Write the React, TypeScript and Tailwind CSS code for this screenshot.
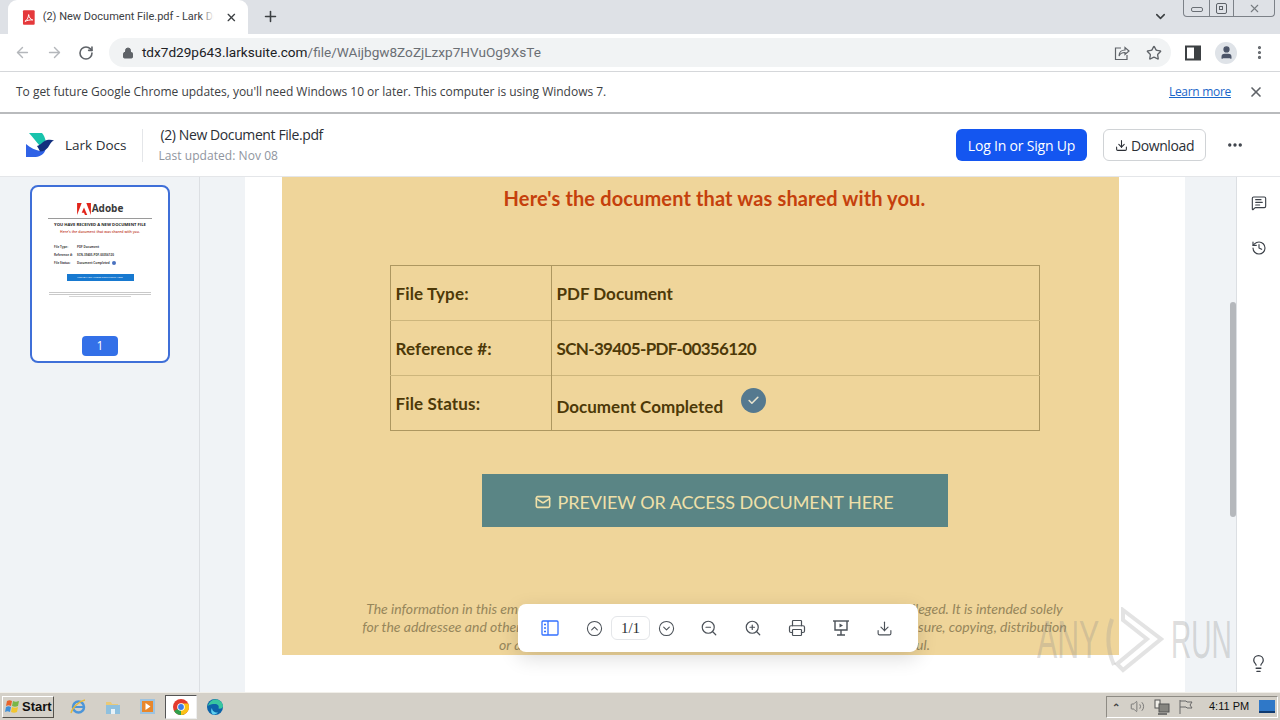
import React from 'react';
import {
  ArrowLeft, ArrowRight, RotateCw, Lock, Star, X, Plus, ChevronDown, EllipsisVertical, Ellipsis,
  Download, CircleChevronUp, CircleChevronDown, ZoomIn, ZoomOut, Printer,
  History, Lightbulb, Mail, Check, User, MessageSquareText, Volume2,
} from 'lucide-react';

const ui = "font-['Open_Sans','Noto_Sans',sans-serif]";
const doc = "font-['Lato','Open_Sans',sans-serif]";

const rows = [
  { label: 'File Type:', value: 'PDF Document' },
  { label: 'Reference #:', value: 'SCN-39405-PDF-00356120', tight: true },
  { label: 'File Status:', value: 'Document Completed', done: true },
];

const PdfIcon = () => (
  <svg width="14" height="15" viewBox="0 0 14 15">
    <rect x="1" y="0" width="12" height="15" rx="1" fill="#e5383b" />
    <path d="M3 11.5c2-1 3.5-3.5 3.8-7 .4 3 2 5 4.2 5.5-2.500-.2-5.500.3-8 1.500z" fill="none" stroke="#fff" strokeWidth="1" />
  </svg>
);

const LarkLogo = () => (
  <svg width="29" height="26" viewBox="0 0 29 26">
    <path d="M4 1h13c2 2 3 5 4 9-3 1-4 3-6 4C11 10 8 5 4 1z" fill="#19c3ac" />
    <path d="M1 12c5 4 9 6 14 7 3-1 5-3 7-6l-2 6c-2 4-6 6-11 6H1z" fill="#2f62e6" />
    <path d="M12 14c4-1 6-5 10-6 2-.5 5-.5 7 .5-3 1-4 4-6 7-2 2-4 4-8 4-1-2-2-4-3-5.500z" fill="#12307e" />
  </svg>
);

const AdobeMark = () => (
  <svg width="14" height="12" viewBox="0 0 15 13">
    <path d="M0 0h5L0 13zM10 0h5v13zM7.500 5l3.500 8H8.500l-1-2.500H5z" fill="#e1251b" />
  </svg>
);

const ChromeIcon = () => (
  <svg width="16" height="16" viewBox="0 0 16 16">
    <circle cx="8" cy="8" r="8" fill="#e33b2e" />
    <path d="M8 8 1.100 12A8 8 0 0 0 8 16c1.500 0 2.500-.4 3.500-1z" fill="#2fa04c" />
    <path d="M8 4.500h7.200A8 8 0 0 1 8 16z" fill="#fbc116" />
    <circle cx="8" cy="8" r="3.800" fill="#fff" />
    <circle cx="8" cy="8" r="2.900" fill="#3b7de8" />
  </svg>
);

const EdgeIcon = () => (
  <svg width="16" height="16" viewBox="0 0 16 16">
    <circle cx="8" cy="8" r="8" fill="#0c63a8" />
    <path d="M1 7c1-4 4-6.500 7.500-6.500C12.500.5 15.500 3 16 7c0 2-2 3-4.500 2.500C12.500 6.500 10.500 5 8 5 5 5 2.500 5.500 1 7z" fill="#38c6a0" />
    <path d="M5 9c0 3 3 5 6 4.500-1.500 1.500-3 2-4.500 2C4 15 3.500 11 5 9z" fill="#5fd0f0" />
  </svg>
);

const IeIcon = () => (
  <svg width="17" height="17" viewBox="0 0 17 17">
    <circle cx="8.500" cy="9" r="5.500" fill="none" stroke="#4c95d8" strokeWidth="2.500" />
    <path d="M4 9h9" stroke="#4c95d8" strokeWidth="2" />
    <path d="M1 15c1-5 8-12 14-13" fill="none" stroke="#e6b93a" strokeWidth="1.300" />
  </svg>
);

const FolderIcon = () => (
  <svg width="16" height="16" viewBox="0 0 16 16">
    <path d="M1 3h5l1 2h6v3H1z" fill="#e9c978" />
    <path d="M1 6h14v9H1z" fill="#8fc0de" />
    <path d="M6 15v-5h4v5z" fill="#e8f2f8" />
  </svg>
);

const MediaIcon = () => (
  <svg width="17" height="17" viewBox="0 0 17 17">
    <rect x="1" y="1" width="15" height="15" fill="#9dc3e0" />
    <rect x="3" y="3" width="11" height="11" fill="#e8872c" />
    <path d="M6.500 5v7l5-3.500z" fill="#fff" />
  </svg>
);

const StartFlag = () => (
  <svg width="16" height="15" viewBox="0 0 16 15">
    <path d="M2 2c2-1 3-1 5 0l-1 5C4 6 3 6 1 7z" fill="#e8632b" />
    <path d="M8 2c2 1 3 1 6 0l-1 5c-2 1-4 1-6 0z" fill="#7ab648" />
    <path d="M1 8c2-1 3-1 5 0l-1 5c-2-1-3-1-5 0z" fill="#3f8fd8" />
    <path d="M7 8c2 1 4 1 6 0l-1 5c-2 1-4 1-6 0z" fill="#f2c62f" />
  </svg>
);

const ShareIcon = () => (
  <svg width="16" height="16" viewBox="0 0 16 16" fill="none" stroke="#5f6368" strokeWidth="1.200">
    <path d="M7 3H1.500v11.500h11.500V10" />
    <path d="M5 11c0-4 3-6 6-6V2.500L15 6l-4 3.500V7.500c-3 0-5 1-6 3.500z" />
  </svg>
);

const SidePanelIcon = () => (
  <svg width="16" height="16" viewBox="0 0 16 16">
    <path d="M1 1.500h14v13H1z" fill="none" stroke="#3c4043" strokeWidth="2" />
    <path d="M9 1.500h6v13H9z" fill="#3c4043" />
  </svg>
);

const OutlineIcon = () => (
  <svg width="18" height="16" viewBox="0 0 18 16" fill="none" stroke="#3370ff" strokeWidth="1.300">
    <rect x="1" y="1" width="16" height="14" rx="1" />
    <path d="M7 1v14" />
    <path d="M3 4.500h2M3 8h2M3 11.500h2" />
  </svg>
);

const PresentIcon = () => (
  <svg width="18" height="18" viewBox="0 0 18 18" fill="none" stroke="currentColor" strokeWidth="1.400">
    <path d="M1 2h16" />
    <path d="M3 2v9h12V2" />
    <path d="M9 11v5M5 16h8" />
    <path d="M7.500 4.500v4l3.500-2z" fill="currentColor" stroke="none" />
  </svg>
);

const NetworkIcon = () => (
  <svg width="16" height="16" viewBox="0 0 16 16">
    <rect x="1" y="1" width="5" height="8" fill="#f1efe9" stroke="#555" />
    <rect x="5" y="5" width="10" height="8" fill="#85847f" stroke="#555" />
    <path d="M4 15h9" stroke="#555" strokeWidth="1.500" />
  </svg>
);

const PlayMark = () => (
  <svg width="58" height="66" viewBox="0 0 58 66" fill="none" stroke="#9a9a9a" strokeOpacity="0.28" strokeWidth="4" className="ml-[6px] mr-[7px]">
    <path d="M6 12C1 26 1 42 8 58" />
    <path d="M17 3l38 29-38 31-6-6 30-25-24-19z" />
  </svg>
);

const ToolButton = ({ children, w = 'w-[44px]' }: { children: React.ReactNode; w?: string }) => (
  <div className={`${w} flex justify-center items-center text-[#4b5158]`}>{children}</div>
);

const App: React.FC = () => {
  return (
    <div className={`relative w-[1280px] h-[720px] flex flex-col overflow-hidden bg-white ${ui}`}>
      {/* browser tabs */}
      <div className="relative h-[34px] shrink-0 bg-[#dee1e6] flex items-end pl-[8px]">
        <div className="w-[240px] h-[34px] bg-white rounded-t-[9px] flex items-center pl-[14px] pr-[10px] gap-[7px]">
          <PdfIcon />
          <span className="relative w-[176px] overflow-hidden whitespace-nowrap text-[11px] text-[#3c4043] font-['Roboto',sans-serif]">
            (2) New Document File.pdf - Lark Do
            <span className="absolute right-0 top-0 h-full w-[14px] bg-linear-to-r from-transparent to-white" />
          </span>
          <X size={13} strokeWidth={2.500} className="text-[#3c4043] ml-[4px]" />
        </div>
        <Plus size={17} strokeWidth={2.200} className="text-[#3c4043] ml-[14px] mb-[9px]" />
        <ChevronDown size={15} strokeWidth={2.500} className="absolute left-[1153px] top-[9px] text-[#3c4043]" />
        <div className="absolute left-[1183px] top-0 w-[92px] h-[17px] border border-t-0 border-[#7c8188] rounded-b-[4px] flex items-center">
          <div className="w-[25px] flex justify-center"><div className="w-[12px] h-[5px] mt-[2px] border border-[#6a6f75] rounded-[2px]" /></div>
          <div className="w-[25px] h-full border-x border-[#7c8188] flex justify-center items-center">
            <div className="relative w-[11px] h-[11px] border border-[#5d6268] rounded-[2px]"><div className="absolute left-[2px] top-[2px] w-[4px] h-[4px] border border-[#5d6268]" /></div>
          </div>
          <div className="flex-1 flex justify-center"><X size={13} className="text-[#767b81]" /></div>
        </div>
      </div>

      {/* address bar */}
      <div className="h-[38px] shrink-0 bg-white border-b border-[#d7d9dc] flex items-center pl-[14px] pr-[12px]">
        <ArrowLeft size={17} className="text-[#b4b7bb]" />
        <ArrowRight size={17} className="text-[#b4b7bb] ml-[15px]" />
        <RotateCw size={16} strokeWidth={2.400} className="text-[#5f6368] ml-[15px]" />
        <div className="ml-[15px] w-[1064px] h-[29px] rounded-full bg-[#f1f3f4] flex items-center pl-[13px] pr-[9px]">
          <Lock size={12} fill="#5f6368" className="text-[#5f6368]" />
          <span className="ml-[8px] text-[13.600px] text-[#202124] font-['Roboto',sans-serif]">
            tdx7d29p643.larksuite.com<span className="text-[#6b6f74]">/file/WAijbgw8ZoZjLzxp7HVuOg9XsTe</span>
          </span>
          <div className="ml-auto flex items-center gap-[16px]">
            <ShareIcon />
            <Star size={16} strokeWidth={2} className="text-[#5f6368]" />
          </div>
        </div>
        <div className="ml-[14px]"><SidePanelIcon /></div>
        <div className="ml-[14px] w-[22px] h-[22px] rounded-full bg-[#dfe3e8] flex items-center justify-center">
          <User size={15} fill="#4b5468" className="text-[#4b5468]" />
        </div>
        <EllipsisVertical size={17} strokeWidth={2.500} className="text-[#5f6368] ml-[14px]" />
      </div>

      {/* update banner */}
      <div className="h-[42px] shrink-0 bg-white border-b-2 border-[#b9bbbd] shadow-[0_1px_2px_rgba(0,0,0,0.15)] flex items-center pl-[16px] pr-[16px] text-[12px] text-[#3c4043]">
        <span className="tracking-[-0.020px]">To get future Google Chrome updates, you'll need Windows 10 or later. This computer is using Windows 7.</span>
        <span className="ml-auto text-[#1a66c9] underline tracking-[-0.300px]">Learn more</span>
        <X size={16} strokeWidth={2.500} className="ml-[17px] text-[#5f6368]" />
      </div>

      {/* lark header */}
      <div className="h-[63px] shrink-0 bg-white border-b border-[#e4e6e9] flex items-center pl-[25px] pr-[36px]">
        <LarkLogo />
        <span className="ml-[11px] text-[13.500px] text-[#2b2f36]">Lark Docs</span>
        <div className="ml-[16px] w-px h-[33px] bg-[#e4e6e9]" />
        <div className="ml-[15px] flex flex-col">
          <span className="ml-[2px] text-[14px] leading-[20px] tracking-[-0.400px] text-[#2b2f36]">(2) New Document File.pdf</span>
          <span className="mt-[2px] text-[12px] leading-[18px] tracking-[0.050px] text-[#8f959e]">Last updated: Nov 08</span>
        </div>
        <div className="ml-auto w-[131px] h-[32px] rounded-[6px] bg-[#1456f0] text-white text-[14px] tracking-[-0.200px] flex items-center justify-center">
          Log In or Sign Up
        </div>
        <div className="ml-[16px] w-[103px] h-[32px] rounded-[6px] border border-[#d0d3d6] text-[#2b2f36] text-[14px] tracking-[-0.400px] flex items-center justify-center gap-[3px]">
          <Download size={13} strokeWidth={2} />
          Download
        </div>
        <Ellipsis size={18} strokeWidth={2.500} className="ml-[20px] text-[#3b4048]" />
      </div>

      {/* viewer */}
      <div className="flex-1 min-h-0 flex">
        <aside className="w-[200px] shrink-0 bg-[#f0f3f6] border-r border-[#dcdfe3] pl-[30px] pt-[8px]">
          <div className="relative w-[140px] h-[178px] bg-white border-2 border-[#3f6fd8] rounded-[8px] flex flex-col items-center pt-[14px]">
            <div className="flex items-center gap-[1px] mt-[1px]">
              <AdobeMark />
              <span className="text-[10px] leading-[13px] font-bold text-[#3a3a3a]">Adobe</span>
            </div>
            <div className="mt-[3px] w-[104px] h-px bg-[#9a9a9a]" />
            <div className="mt-[2px] text-[4.200px] leading-[8px] font-bold text-[#222] whitespace-nowrap">YOU HAVE RECEIVED A NEW DOCUMENT FILE</div>
            <div className="text-[3.500px] leading-[6px] font-semibold text-[#c0392b] whitespace-nowrap">Here's the document that was shared with you.</div>
            <div className="mt-[8px] w-[92px] text-[3px] leading-[8px] font-bold text-[#444]">
              <div className="flex"><span className="w-[23px]">File Type:</span><span>PDF Document</span></div>
              <div className="flex"><span className="w-[23px]">Reference #:</span><span>SCN-39405-PDF-00356120</span></div>
              <div className="flex items-center"><span className="w-[23px]">File Status:</span><span>Document Completed</span><span className="ml-[2px] w-[4px] h-[4px] rounded-full bg-[#4a72c0]" /></div>
            </div>
            <div className="mt-[7px] w-[67px] h-[7px] bg-[#1779d0] text-[2.500px] leading-[7px] text-center text-white whitespace-nowrap">PREVIEW OR ACCESS DOCUMENT HERE</div>
            <div className="mt-[11px] flex flex-col items-center gap-[1px]">
              <div className="w-[102px] h-px bg-[#c9c9c9]" />
              <div className="w-[102px] h-px bg-[#c9c9c9]" />
              <div className="w-[62px] h-px bg-[#d4d4d4]" />
            </div>
            <div className="absolute left-[50px] top-[149px] w-[36px] h-[20px] rounded-[4px] bg-[#3370e8] text-white text-[12px] leading-[20px] text-center">1</div>
          </div>
        </aside>

        <main className="relative flex-1 bg-[#f0f3f6] pl-[45px] overflow-hidden">
          <div className="w-[940px] h-full bg-white pl-[37px]">
            <div className={`w-[837px] h-[478px] bg-[#efd59a] pl-[28px] flex flex-col items-center overflow-hidden ${doc}`}>
              <h1 className="mt-[7px] text-[20px] leading-[28px] tracking-[0.130px] font-bold text-[#c5400c]">Here's the document that was shared with you.</h1>

              <table className="mt-[53px] w-[650px] border-collapse border border-[#ad9760] text-[17px] font-bold text-[#4d3908]">
                <tbody>
                  {rows.map(row => (
                    <tr key={row.label} className="h-[55px] border-b border-[#cdb67c] last:border-[#ad9760]">
                      <td className="w-[161px] pl-[5px] pt-[2px] border-r border-[#ad9760] tracking-[0.150px]">{row.label}</td>
                      <td className={`pl-[5px] pt-[2px] ${row.tight ? 'tracking-[-0.650px]' : ''}`}>
                        {row.done ? (
                          <div className="flex items-start">
                            <span className="mt-[6px]">{row.value}</span>
                            <span className="ml-[18px] w-[25px] h-[25px] rounded-full bg-[#55798f] flex items-center justify-center">
                              <Check size={13} strokeWidth={3} className="text-[#e8e4cf]" />
                            </span>
                          </div>
                        ) : row.value}
                      </td>
                    </tr>
                  ))}
                </tbody>
              </table>

              <div className="mt-[43px] w-[466px] h-[53px] shrink-0 pt-[3px] bg-[#5a8585] text-[#efe0a9] text-[18px] tracking-[-0.050px] flex items-center justify-center gap-[6px]">
                <Mail size={16} strokeWidth={2.400} />
                PREVIEW OR ACCESS DOCUMENT HERE
              </div>

              <p className="mt-[73px] text-[14px] leading-[18px] italic text-center whitespace-nowrap text-[#96865a]">
                The information in this email and any attachments are confidential and may also be legally privileged. It is intended solely
                <br />
                for the addressee and others authorized to receive it. Any such review, use, retransmission, disclosure, copying, distribution
                <br />
                or any action taken in reliance on it is prohibited and may well be unlawful.
              </p>
            </div>
          </div>

          {/* scrollbar */}
          <div className="absolute left-[1030px] top-[125px] w-[6px] h-[215px] rounded-full bg-[#b5b8bc]" />

          {/* floating page toolbar */}
          <div className="absolute left-[318px] top-[427px] w-[400px] h-[48px] rounded-[8px] bg-white shadow-[0_6px_20px_rgba(0,0,0,0.14)] flex items-center pl-[10px]">
            <ToolButton><OutlineIcon /></ToolButton>
            <ToolButton><CircleChevronUp size={17} strokeWidth={1.500} /></ToolButton>
            <div className="ml-[-5px] w-[39px] h-[24px] rounded-[6px] border border-[#e4e6e9] text-[15px] leading-[22px] text-center text-[#2b2f36] font-['Liberation_Serif',serif]">1/1</div>
            <ToolButton w="w-[32px]"><CircleChevronDown size={17} strokeWidth={1.500} /></ToolButton>
            <div className="w-[5px]" />
            <ToolButton><ZoomOut size={18} strokeWidth={1.600} /></ToolButton>
            <ToolButton><ZoomIn size={18} strokeWidth={1.600} /></ToolButton>
            <ToolButton><Printer size={18} strokeWidth={1.600} /></ToolButton>
            <div className="w-[43px] flex justify-center items-center text-[#4b5158]"><PresentIcon /></div>
            <ToolButton><Download size={17} strokeWidth={1.600} /></ToolButton>
          </div>
        </main>

        <aside className="w-[44px] shrink-0 bg-white border-l border-[#dcdfe3] flex flex-col items-center pt-[18px] text-[#3b4048]">
          <MessageSquareText size={16} strokeWidth={1.700} />
          <History size={16} strokeWidth={1.700} className="mt-[29px]" />
          <Lightbulb size={19} strokeWidth={1.600} className="mt-[398px]" />
        </aside>
      </div>

      {/* taskbar */}
      <div className="relative h-[28px] shrink-0 bg-[#d4d0c8] border-t border-[#f1efe9] flex items-center pl-[2px]">
        <div className="w-[52px] h-[22px] bg-[#d4d0c8] border border-[#fff] border-r-[#55524c] border-b-[#55524c] flex items-center pl-[2px] gap-[1px] text-[13px] font-bold text-[#111] font-['Liberation_Sans',sans-serif]">
          <StartFlag />
          Start
        </div>
        <div className="ml-[16px]"><IeIcon /></div>
        <div className="ml-[18px]"><FolderIcon /></div>
        <div className="ml-[18px]"><MediaIcon /></div>
        <div className="ml-[9px] w-[32px] h-[24px] bg-white border border-[#555] border-r-[#eee] border-b-[#eee] flex items-center justify-center"><ChromeIcon /></div>
        <div className="ml-[10px]"><EdgeIcon /></div>
        <div className="ml-auto mr-[2px] w-[172px] h-[22px] border border-[#8e8b84] border-r-white border-b-white flex items-center pl-[5px] text-[#444]">
          <span className="text-[10px] font-bold leading-none">⌃</span>
          <Volume2 size={15} strokeWidth={1.300} className="ml-[10px] text-[#666]" />
          <div className="ml-[9px]"><NetworkIcon /></div>
          <svg width="16" height="15" viewBox="0 0 16 15" className="ml-[8px]" fill="none" stroke="#666"><path d="M2 1v14M2 2h6l1 1h5l-2 3 2 3H9L8 8H2" /></svg>
          <span className="ml-[15px] text-[11px] text-[#111] font-['Liberation_Sans',sans-serif]">4:11 PM</span>
          <div className="ml-auto mr-[2px] w-[16px] h-[13px] bg-[#2f78c8] border-b-2 border-[#103a70]" />
        </div>
      </div>

      {/* watermark */}
      <div className="pointer-events-none absolute left-[1037px] top-[607px] flex items-center text-[53px] leading-[66px] text-[#8c8c8c]/30 font-['Liberation_Sans',sans-serif]">
        <span className="w-[63px] inline-block scale-x-[0.57] origin-left">ANY</span>
        <PlayMark />
        <span className="w-[62px] inline-block scale-x-[0.53] origin-left">RUN</span>
      </div>
    </div>
  );
};

export default App;
